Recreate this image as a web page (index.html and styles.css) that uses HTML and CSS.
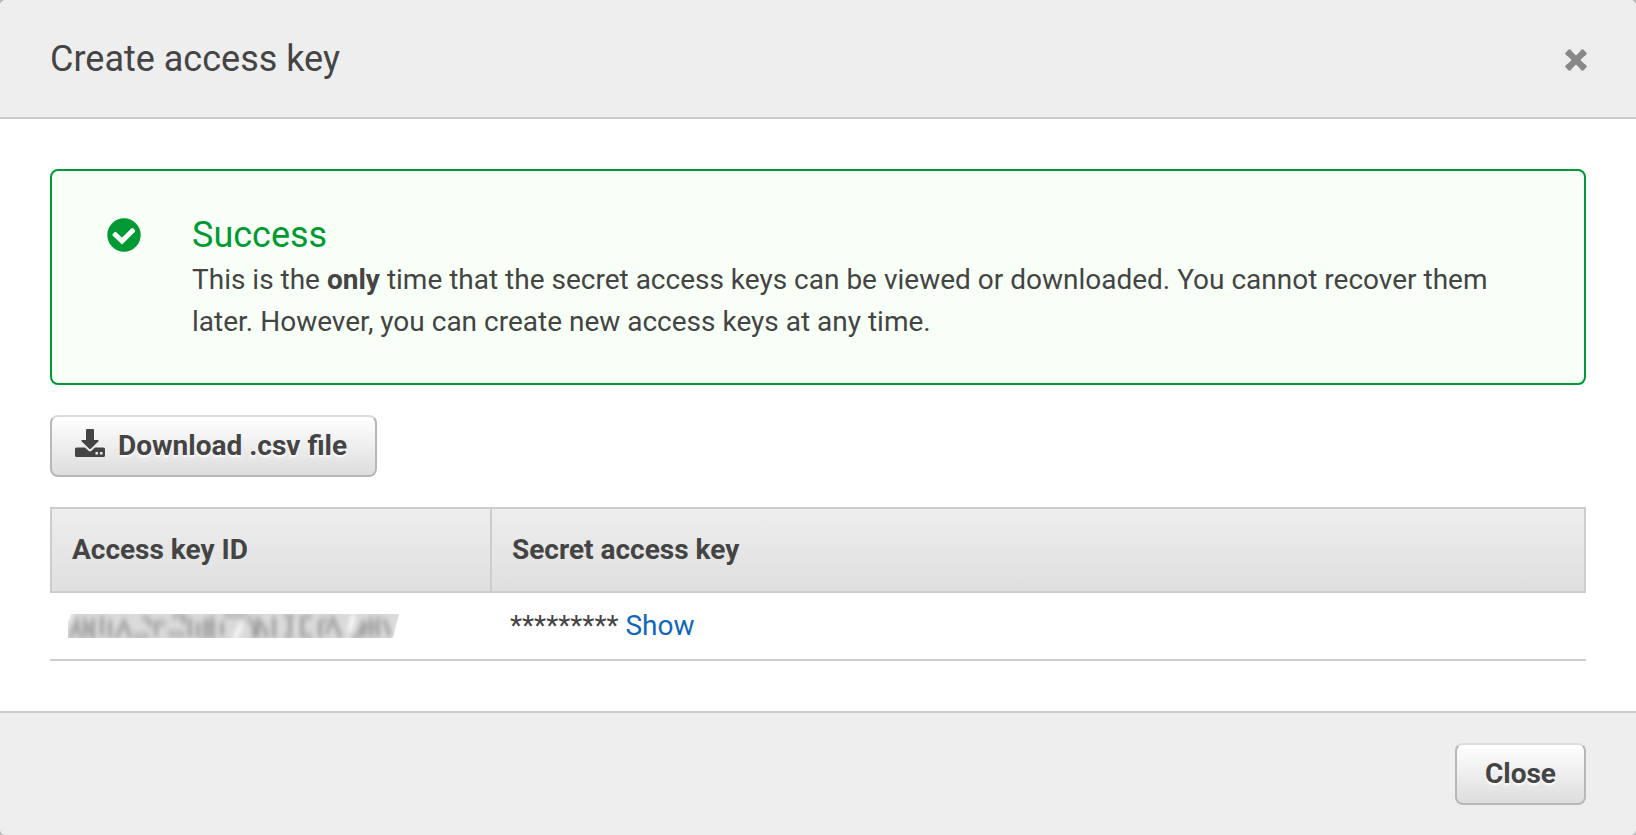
FILE: index.html
```html
<!DOCTYPE html>
<html lang="en">
<head>
  <meta charset="UTF-8" />
  <meta name="viewport" content="width=device-width, initial-scale=1" />
  <title>Create access key</title>
  <link rel="stylesheet" href="styles.css">
</head>
<body>
  <div class="modal" role="dialog" aria-labelledby="modalTitle">
    <header class="modal-header">
      <h1 id="modalTitle">Create access key</h1>
      <button type="button" class="dismiss" aria-label="Dismiss">
        <svg viewBox="0 0 22 22" width="22" height="22">
          <path d="M4 4 18 18M18 4 4 18" fill="none" stroke="#888" stroke-width="6.200" />
          <path d="M4.600 2.400 2.400 4.600M17.400 2.400 19.600 4.600M4.600 19.600 2.400 17.400M17.400 19.600 19.600 17.400" fill="none" stroke="#888" stroke-width="4" stroke-linecap="round" />
        </svg>
      </button>
    </header>

    <main class="modal-body">
      <section class="alert">
        <svg class="alert-icon" viewBox="0 0 34 34" width="34" height="34">
          <circle cx="17" cy="17" r="16.7" fill="#093" />
          <path d="M7.800 16.200 15 23 26 12.300" fill="none" stroke="#f7fff7" stroke-width="5" />
          <path d="M8.300 15.400 7 16.800M25.400 11.500 26.700 12.900" fill="none" stroke="#f7fff7" stroke-width="3" stroke-linecap="round" />
        </svg>
        <div class="alert-text">
          <h2>Success</h2>
          <p>This is the <strong>only</strong> time that the secret access keys can be viewed or downloaded. You cannot recover them later. However, you can create new access keys at any time.</p>
        </div>
      </section>

      <button type="button" class="btn download-btn">
        <svg class="download-icon" viewBox="0 0 30 28" width="30" height="28">
          <path d="M12 0h6q1 0 1 1v10h4q1.200.2.500 1.200l-7.700 7.500q-.8.700-1.600 0L6.500 12.200q-.7-1 .5-1.200H11V1q0-1 1-1z" fill="#444" />
          <path d="M1.500 18.500H10l3.500 3.300q1.500 1.200 3 0L20 18.500h8.500q1.500 0 1.500 1.500v6.500q0 1.500-1.500 1.500h-27Q0 28 0 26.500V20q0-1.500 1.500-1.500zM20.500 23v2.500h2.500V23zM25 23v2.500h2.500V23z" fill="#444" fill-rule="evenodd" />
        </svg>
        Download .csv file
      </button>

      <table class="keys">
        <thead>
          <tr>
            <th class="key-col">Access key ID</th>
            <th>Secret access key</th>
          </tr>
        </thead>
        <tbody>
          <tr>
            <td>
              <!-- key ID is smudged out -->
              <svg class="redacted" viewBox="0 0 331 24" width="331" height="24" role="img" aria-label="Hidden key ID">
                <defs>
                  <filter id="smudge" x="-5%" y="-50%" width="110%" height="200%">
                    <feGaussianBlur stdDeviation="2 3" />
                  </filter>
                </defs>
                <path d="M3 0H331L325 24H0V7z" fill="#dadada" />
                <g filter="url(#smudge)" fill="none" stroke="#a2a2a2" stroke-width="4">
                  <path d="M2 24 9 8l3 16M17 24V8l8 14V4M34 2v20M42 24V6M48 24 56 8l7 16" />
                  <path d="M66 22h15M74 4q10 0 8 9M88 22V9h10M100 20h17M104 2h12v8" />
                  <path d="M122 4v20M130 8v16M138 4v20M144 2v22M134 12h14M134 22h14" />
                  <path d="M156 1h22M154 8v14" />
                  <path d="M180 3l6 9v12M190 24V6l8 10v8M206 3v21" />
                  <path d="M216 2h10M216 22h9M222 5v14M234 2v22M236 3h8M236 22h8" />
                  <path d="M252 24V8l8-3M258 20 265 5l8 19M284 23h6l6-16v16M303 3v21M296 13h14M310 3v20M316 5l6 17" />
                </g>
                <g filter="url(#smudge)" fill="none" stroke="#fff" stroke-width="4">
                  <path d="M166 26 174 9M281 18 286 0M327 28 334 6M-2 8 3-2" />
                </g>
              </svg>
            </td>
            <td>********* <a href="#">Show</a></td>
          </tr>
        </tbody>
      </table>
    </main>

    <footer class="modal-footer">
      <button type="button" class="btn close-btn">Close</button>
    </footer>
  </div>
</body>
</html>
```
FILE: styles.css
```css
* {
  box-sizing: border-box;
}

body {
  margin: 0;
  background: #bbb;
  color: #444;
  font: 28px/42px Roboto, sans-serif;
}

h1, h2, p {
  margin: 0;
}

.modal {
  background: #fff;
  border-radius: 6px;
  overflow: hidden;
}

.modal-header {
  display: flex;
  align-items: center;
  justify-content: space-between;
  padding: 35px 49px 34px 50px;
  background: #eee;
  border-bottom: 2px solid #ccc;
}

h1, h2 {
  font-size: 36px;
  font-weight: 400;
  line-height: 48px;
}

.dismiss {
  display: flex;
  margin-top: 2px;
  padding: 0;
  border: none;
  background: none;
  cursor: pointer;
}

.modal-body {
  padding: 50px;
}

.alert {
  display: flex;
  gap: 51px;
  padding: 40px 55px;
  background: #f7fff7;
  border: 2px solid #093;
  border-radius: 8px;
}

.alert-icon {
  flex: none;
  margin-top: 7px;
}

.alert h2 {
  color: #093;
}

.btn {
  display: flex;
  align-items: center;
  height: 62px;
  padding: 0 28px;
  border: 2px solid #b7b7b7;
  border-top-color: #ddd;
  border-radius: 8px;
  background: linear-gradient(#fff, #ddd);
  color: #444;
  font: bold 28px/42px Roboto, sans-serif;
  text-shadow: 0 2px 2px #fff;
  cursor: pointer;
}

.download-btn {
  gap: 13px;
  margin: 30px 0;
  padding-left: 23px;
}

.download-icon {
  margin-bottom: 6px;
}

.keys {
  width: 100%;
  border-collapse: separate;
  border-spacing: 0;
  border-top: 2px solid #ccc;
}

.keys th,
.keys td {
  padding: 12px 18px;
  border-bottom: 2px solid #ccc;
  text-align: left;
}

.keys th {
  height: 84px;
  padding: 20px;
  background: linear-gradient(#eee, #dfdfdf);
  border-right: 2px solid #ccc;
}

.keys th:first-child {
  border-left: 2px solid #ccc;
}

.key-col {
  width: 442px;
}

.keys a {
  color: #1166bb;
  text-decoration: none;
}

.redacted {
  display: block;
}

.modal-footer {
  display: flex;
  justify-content: flex-end;
  padding: 30px 50px;
  background: #eee;
  border-top: 2px solid #ccc;
}
```
